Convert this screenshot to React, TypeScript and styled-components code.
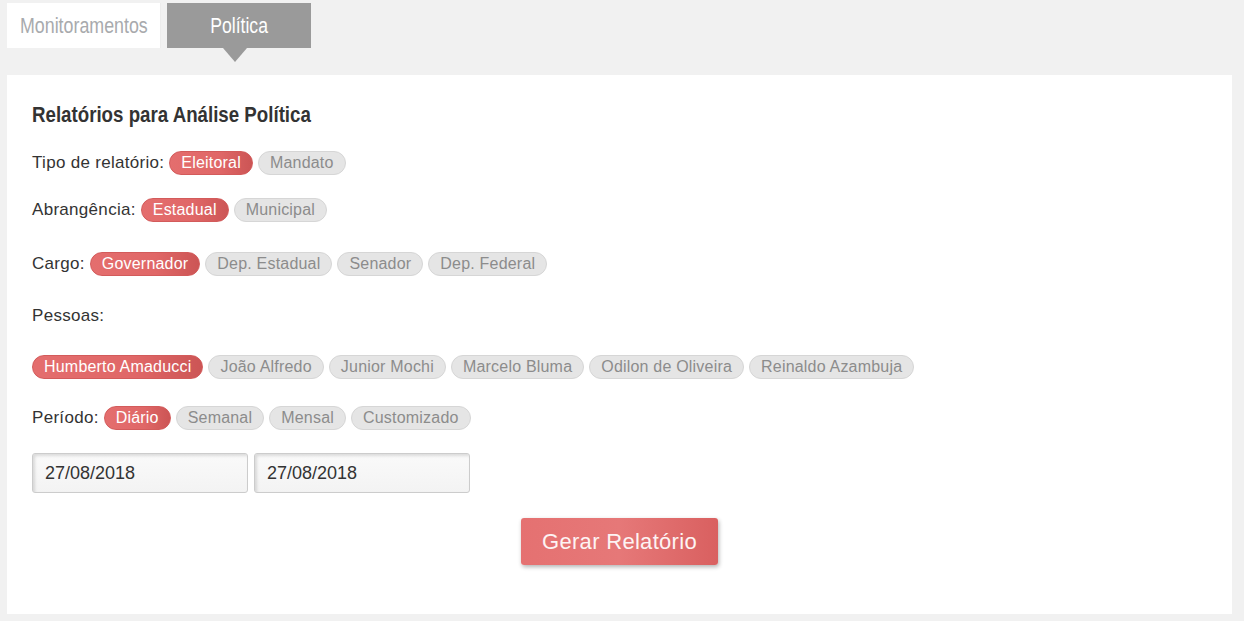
import React, { useState } from "react";
import styled, { createGlobalStyle, css } from "styled-components";

const Global = createGlobalStyle`
  html, body { margin: 0; padding: 0; background: #f1f1f1; }
  body { font-family: "Liberation Sans", Arial, sans-serif; }
  * { box-sizing: border-box; }
`;

const Page = styled.div`
  padding: 3px 12px 7px 7px;
  display: flex;
  flex-direction: column;
`;

const TabBar = styled.div`
  display: flex;
  gap: 6px;
  height: 45px;
`;

const Narrow = styled.span<{ $scale: number }>`
  display: inline-block;
  white-space: nowrap;
  transform: scaleX(${(p) => p.$scale});
`;

const Tab = styled.div<{ $active?: boolean }>`
  position: relative;
  display: flex;
  align-items: center;
  justify-content: center;
  height: 45px;
  font-family: "Liberation Sans", Arial, sans-serif;
  font-size: 22px;
  ${(p) =>
    p.$active
      ? css`
          width: 144px;
          background: #9a9a9a;
          color: #ffffff;
          &::after {
            content: "";
            position: absolute;
            left: 56px;
            top: 45px;
            border-left: 12px solid transparent;
            border-right: 12px solid transparent;
            border-top: 14px solid #9a9a9a;
          }
        `
      : css`
          width: 154px;
          background: #ffffff;
          color: #a8aaad;
          border-right: 1px solid #ececec;
        `}
`;

const Panel = styled.div`
  margin-top: 27px;
  background: #ffffff;
  padding: 25px 25px 49px 25px;
  display: flex;
  flex-direction: column;
`;

const Heading = styled.h2`
  margin: 0;
  font-family: "Liberation Sans", Arial, sans-serif;
  font-weight: 700;
  font-size: 22px;
  line-height: 30px;
  color: #333333;
  & > span {
    transform-origin: left center;
  }
`;

const Row = styled.div<{ $mt: number; $gap?: number }>`
  margin-top: ${(p) => p.$mt}px;
  display: flex;
  align-items: center;
  gap: ${(p) => p.$gap ?? 5}px;
  min-height: 24px;
`;

const Label = styled.span`
  font-size: 17px;
  letter-spacing: 0.3px;
  color: #333333;
`;

const Pill = styled.button<{ $active?: boolean }>`
  font-family: "Liberation Sans", Arial, sans-serif;
  font-size: 16px;
  letter-spacing: 0.2px;
  height: 24px;
  line-height: 22px;
  padding: 0 11px;
  border-radius: 12px;
  cursor: pointer;
  ${(p) =>
    p.$active
      ? css`
          color: #ffffff;
          background: linear-gradient(to right, #e46e6e, #e06767 60%, #cc5555);
          border: 1px solid #d35b5b;
        `
      : css`
          color: #8c8c8c;
          background: #e5e5e5;
          border: 1px solid #d6d6d6;
        `}
`;

const DateInput = styled.input`
  width: 216px;
  height: 40px;
  padding: 0 12px;
  font-family: "Liberation Sans", Arial, sans-serif;
  font-size: 18px;
  color: #333333;
  border: 1px solid #cccccc;
  border-radius: 3px;
  background: linear-gradient(#fafafa, #f3f3f3);
  box-shadow: inset 2px 2px 3px rgba(0, 0, 0, 0.12);
  outline: none;
`;

const Actions = styled.div`
  margin-top: 25px;
  display: flex;
  justify-content: center;
`;

const SubmitButton = styled.button`
  width: 197px;
  height: 47px;
  border: none;
  border-radius: 3px;
  font-family: "Liberation Sans", Arial, sans-serif;
  font-size: 22px;
  letter-spacing: 0.3px;
  color: #fdf3f3;
  background: linear-gradient(to right, #e57171, #e67878 50%, #d96060);
  box-shadow: 1px 2px 4px rgba(0, 0, 0, 0.3);
  cursor: pointer;
`;

type Group = { label: string; items: string[]; mt: number };

const groups: Group[] = [
  { label: "Tipo de relatório:", items: ["Eleitoral", "Mandato"], mt: 21 },
  { label: "Abrangência:", items: ["Estadual", "Municipal"], mt: 23 },
  { label: "Cargo:", items: ["Governador", "Dep. Estadual", "Senador", "Dep. Federal"], mt: 30 },
];

const people = [
  "Humberto Amaducci",
  "João Alfredo",
  "Junior Mochi",
  "Marcelo Bluma",
  "Odilon de Oliveira",
  "Reinaldo Azambuja",
];

export default function App() {
  const [sel, setSel] = useState<Record<string, string>>({
    "Tipo de relatório:": "Eleitoral",
    "Abrangência:": "Estadual",
    "Cargo:": "Governador",
    pessoas: "Humberto Amaducci",
    periodo: "Diário",
  });
  const pick = (k: string, v: string) => setSel((s) => ({ ...s, [k]: v }));

  return (
    <>
      <Global />
      <Page>
        <TabBar>
          <Tab>
            <Narrow $scale={0.81}>Monitoramentos</Narrow>
          </Tab>
          <Tab $active>
            <Narrow $scale={0.8}>Política</Narrow>
          </Tab>
        </TabBar>
        <Panel>
          <Heading>
            <Narrow $scale={0.85}>Relatórios para Análise Política</Narrow>
          </Heading>
          {groups.map((g) => (
            <Row key={g.label} $mt={g.mt}>
              <Label>{g.label}</Label>
              {g.items.map((it) => (
                <Pill key={it} $active={sel[g.label] === it} onClick={() => pick(g.label, it)}>
                  {it}
                </Pill>
              ))}
            </Row>
          ))}
          <Row $mt={28}>
            <Label>Pessoas:</Label>
          </Row>
          <Row $mt={27}>
            {people.map((it) => (
              <Pill key={it} $active={sel.pessoas === it} onClick={() => pick("pessoas", it)}>
                {it}
              </Pill>
            ))}
          </Row>
          <Row $mt={27}>
            <Label>Período:</Label>
            {["Diário", "Semanal", "Mensal", "Customizado"].map((it) => (
              <Pill key={it} $active={sel.periodo === it} onClick={() => pick("periodo", it)}>
                {it}
              </Pill>
            ))}
          </Row>
          <Row $mt={23} $gap={6}>
            <DateInput defaultValue="27/08/2018" />
            <DateInput defaultValue="27/08/2018" />
          </Row>
          <Actions>
            <SubmitButton>Gerar Relatório</SubmitButton>
          </Actions>
        </Panel>
      </Page>
    </>
  );
}
